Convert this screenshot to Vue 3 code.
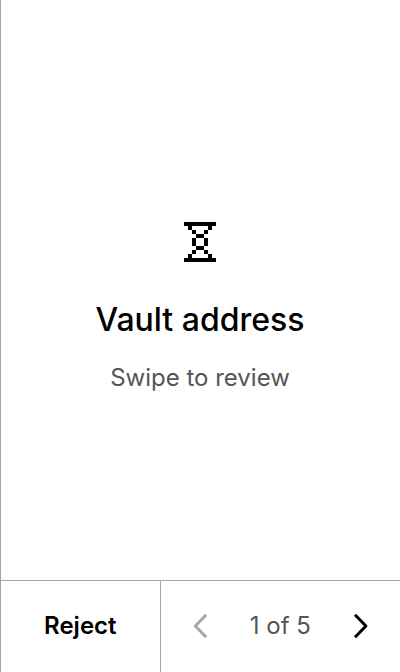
<script setup>
import { ref } from 'vue'

const total = 5
const page = ref(1)

const hourglass = [
  '########',
  '.#....#.',
  '..#..#..',
  '...##...',
  '..#..#..',
  '..#..#..',
  '...##...',
  '..#..#..',
  '.#....#.',
  '########',
]

const cells = hourglass.flatMap((row, y) =>
  [...row].flatMap((c, x) => (c === '#' ? [{ x, y }] : []))
)
</script>

<template>
  <div class="screen">
    <main class="content">
      <svg class="hourglass" viewBox="0 0 8 10" shape-rendering="crispEdges" aria-hidden="true">
        <rect v-for="c in cells" :key="`${c.x}-${c.y}`" :x="c.x" :y="c.y" width="1" height="1" />
      </svg>
      <h1 class="title">Vault address</h1>
      <p class="subtitle">Swipe to review</p>
    </main>
    <footer class="footer">
      <button class="reject" type="button">Reject</button>
      <nav class="pager">
        <button class="arrow" type="button" aria-label="Previous" :disabled="page === 1" @click="page--">
          <svg viewBox="0 0 40 40" aria-hidden="true"><path d="M25.2 8.8 14.3 20 25.2 31.2" /></svg>
        </button>
        <span class="count">{{ page }} of {{ total }}</span>
        <button class="arrow" type="button" aria-label="Next" :disabled="page === total" @click="page++">
          <svg viewBox="0 0 40 40" aria-hidden="true"><path d="M15 8.8 25.9 20 15 31.2" /></svg>
        </button>
      </nav>
    </footer>
  </div>
</template>

<style>
body {
  margin: 0;
  background: #fff;
}
</style>

<style scoped>
.screen {
  box-sizing: border-box;
  display: flex;
  flex-direction: column;
  min-height: 100vh;
  border-left: 1px solid #a6a6a6;
  font-family: Inter, "Liberation Sans", sans-serif;
  color: #000;
}

.content {
  flex: 1;
  display: flex;
  flex-direction: column;
  align-items: center;
  justify-content: center;
  padding: 38px 24px 0 23px;
  text-align: center;
}

.hourglass {
  width: 32px;
  height: 40px;
  margin-bottom: 38px;
}

.title {
  margin: 0 0 20px;
  font-size: 32px;
  line-height: 40px;
  font-weight: 500;
}

.subtitle {
  margin: 0;
  font-size: 24px;
  line-height: 36px;
  color: #555;
}

.footer {
  display: grid;
  grid-template-columns: 2fr 3fr;
  height: 91px;
  border-top: 1px solid #a6a6a6;
}

button {
  padding: 0;
  border: 0;
  background: none;
  font: inherit;
  color: inherit;
}

.reject {
  padding-bottom: 2px;
  border-right: 1px solid #a6a6a6;
  font-size: 24px;
  font-weight: 600;
}

.pager {
  display: flex;
  align-items: center;
  justify-content: space-between;
  padding: 0 20px 1px;
}

.arrow {
  display: flex;
}

.arrow svg {
  width: 40px;
  height: 40px;
  fill: none;
  stroke: currentColor;
  stroke-width: 3;
  stroke-linejoin: round;
}

.arrow:disabled {
  color: #a6a6a6;
}

.count {
  font-size: 24px;
  line-height: 36px;
  color: #555;
}
</style>
